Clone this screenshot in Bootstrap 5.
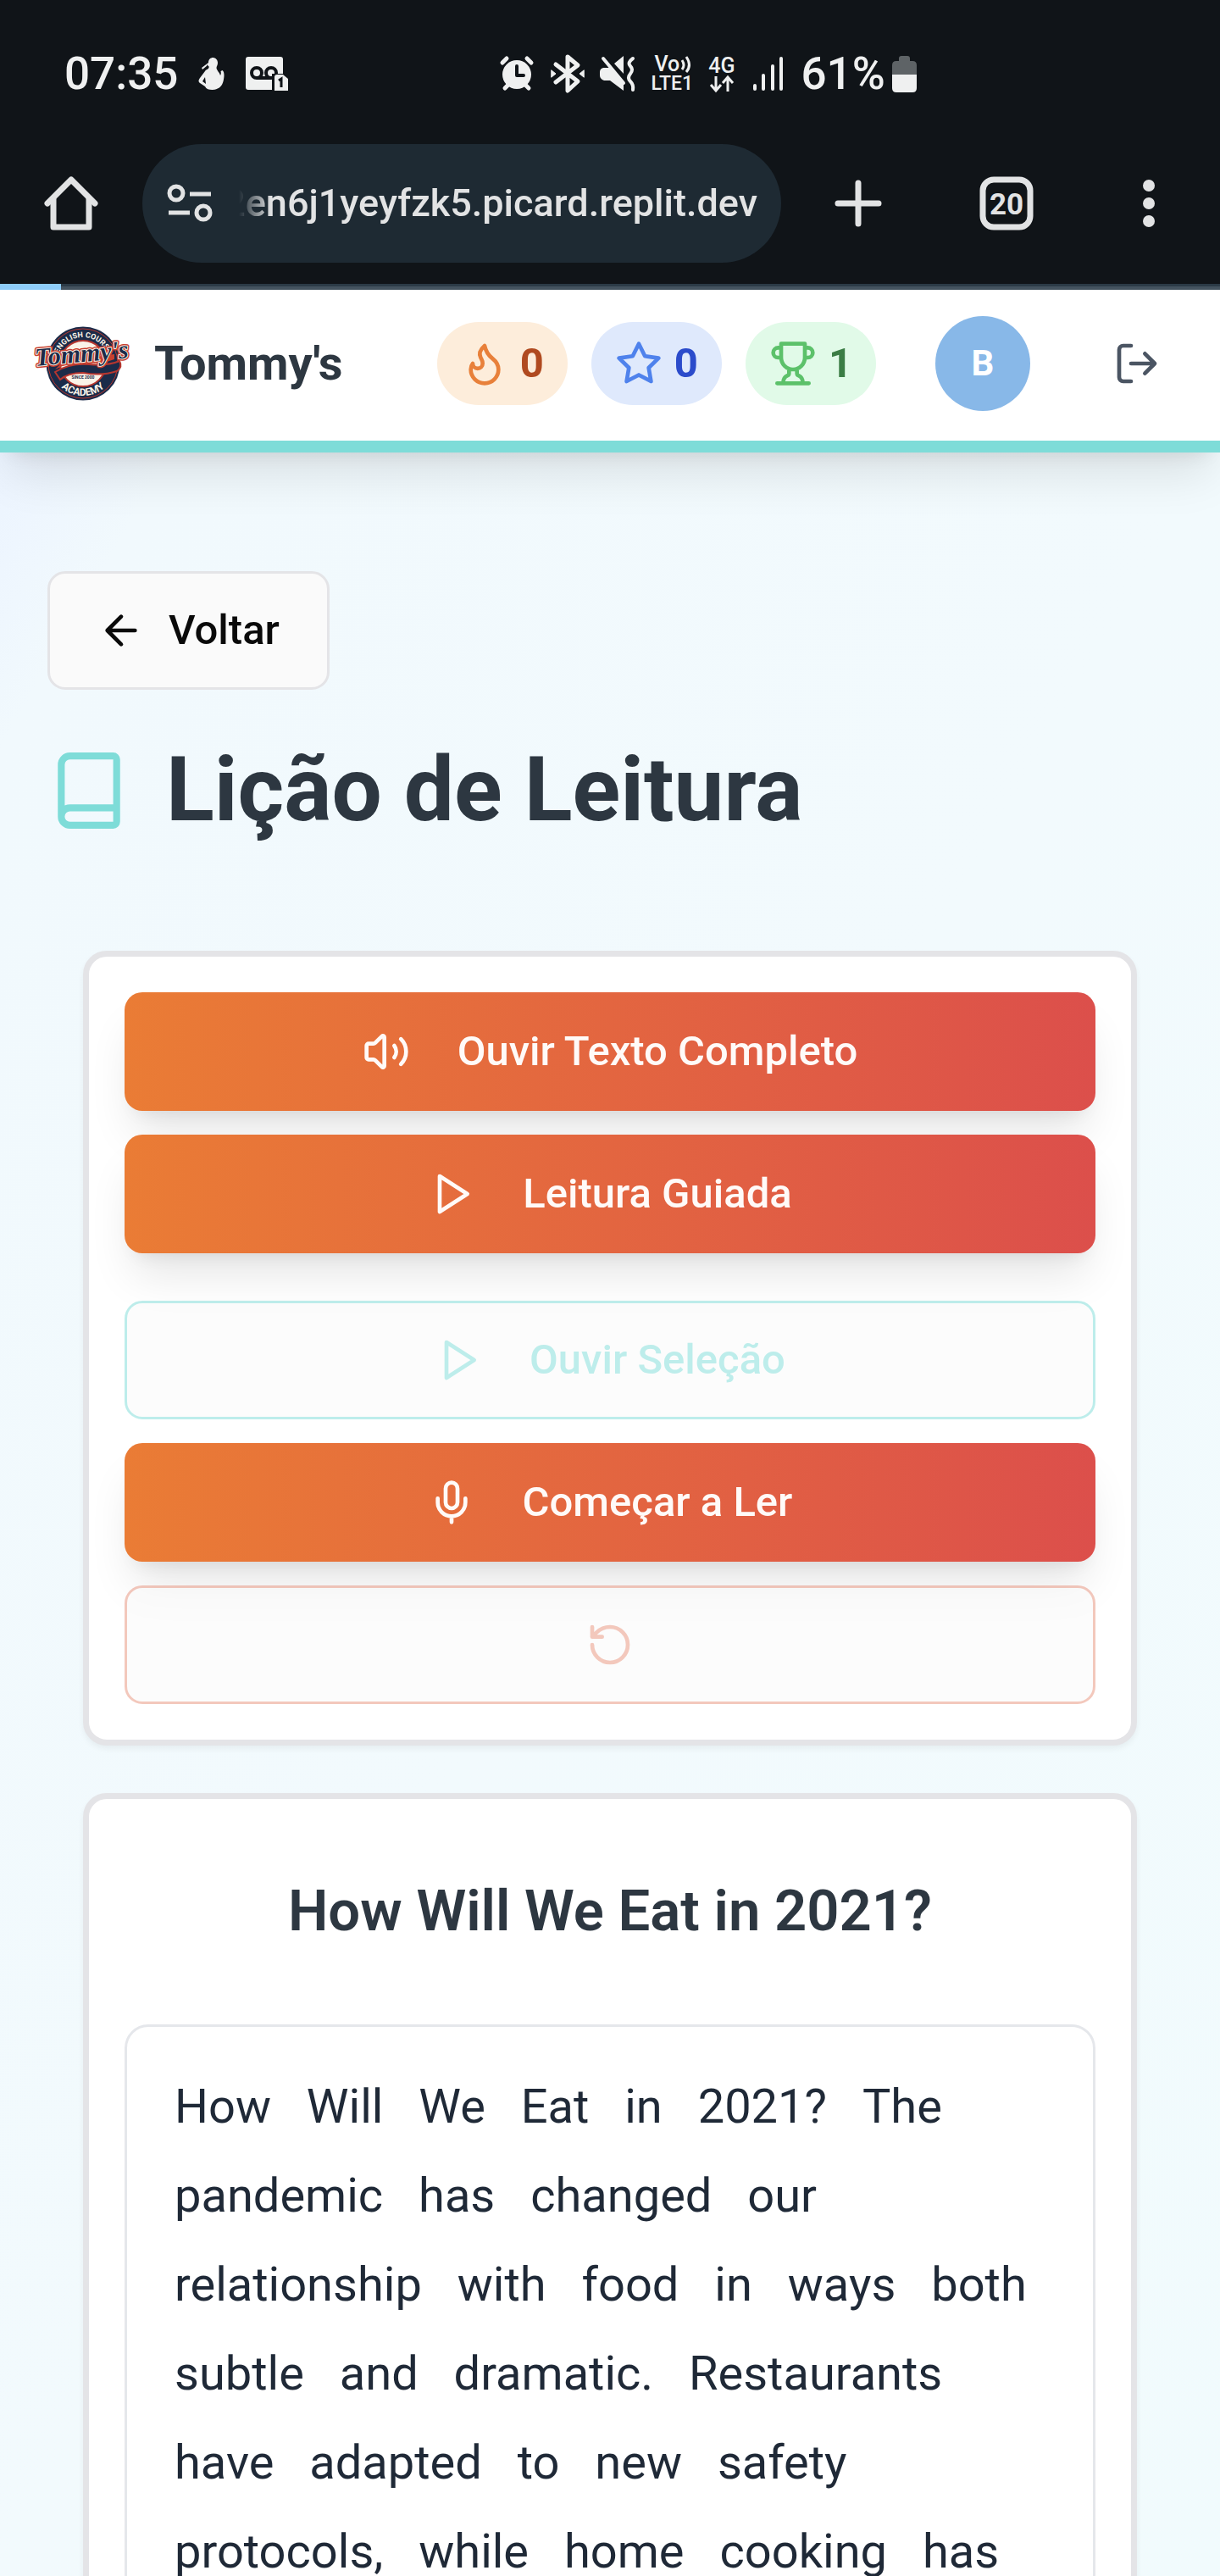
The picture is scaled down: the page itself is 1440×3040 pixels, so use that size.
<!DOCTYPE html>
<html lang="pt-BR">
<head>
<meta charset="utf-8">
<meta name="viewport" content="width=device-width, initial-scale=1">
<title>Tommy's – Lição de Leitura</title>
<link href="https://cdn.jsdelivr.net/npm/bootstrap@5.3.0/dist/css/bootstrap.min.css" rel="stylesheet">
<style>
  :root { --teal: #7edcd8; --coral: #e8927c; --ink: #2d3741; --line: #e4e4e7; }
  body { font-family: Roboto, "Liberation Sans", sans-serif; font-size: 49px; line-height: 70px; background: #101418; }
  svg { display: block; flex: none; overflow: visible; }
  .stroke-icon { width: 56px; height: 56px; fill: none; stroke: currentColor; stroke-width: 2; stroke-linecap: round; stroke-linejoin: round; }
  .shade { box-shadow: 0 35px 52px -10px rgba(0,0,0,.1), 0 14px 21px -14px rgba(0,0,0,.1); }

  /* phone status bar */
  .status-strip { height: 170px; padding: 4px 0 0 76px; font-size: 53px; font-weight: 500; color: #eff0f0; background: #101418; }
  .status-left { gap: 24px; }
  .status-right { gap: 18px; margin-left: 250px; }
  .net-label { font-size: 25px; line-height: 23px; gap: 0; }
  .net-label small { font-size: 23px; line-height: 23px; font-weight: 500; }

  /* browser toolbar */
  .browser-strip { padding: 0 0 25px 52px; background: #101418; color: #e2e3e4; }
  .browser-strip .btn { color: inherit; }
  .tool-slot { width: 168px; }
  .tool-slot.first-slot { width: 182px; }
  .url-pill { height: 140px; margin-left: 52px; padding: 0 28px 0 30px; border-radius: 70px; background: #1e2a33; }
  .url-pill input { font-size: 45px; font-weight: 500; line-height: 60px; color: #e2e3e4; text-align: right; -webkit-mask-image: linear-gradient(to right, transparent 22px, #000 60px); mask-image: linear-gradient(to right, transparent 22px, #000 60px); }
  .load-track { height: 7px; border-radius: 0; background: linear-gradient(#2b3a46 3px, #44535f 3px); }
  .load-track .progress-bar { background: #8ecdf9; }

  /* site header */
  .site-top { padding: 31px 70px 35px 42px; border-bottom: 14px solid var(--teal); background: #fff; z-index: 2; }
  .brand-name { font-size: 56px; font-weight: 700; color: var(--ink); margin-left: 28px; }
  .stat-pill { height: 98px; padding: 0 28px; gap: 14px; border-radius: 49px; font-weight: 700; }
  .stat-fire { background: #fdeddb; color: #b04a20; }
  .stat-fire svg { color: #e8803a; }
  .stat-star { background: #dfe9fc; color: #2b4bcb; }
  .stat-star svg { color: #4f82ec; }
  .stat-cup { background: #e1fae8; color: #3b7d45; }
  .stat-cup svg { color: #5cc16a; }
  .stat-row { gap: 28px; }
  .user-dot { width: 112px; height: 112px; margin-left: 70px; background: #88b8e8; color: #fff; font-size: 42px; font-weight: 700; }
  .exit-btn { margin-left: 98px; color: #4b5563; }

  /* page */
  .lesson-page { background: linear-gradient(to bottom right, #ecf4ff, #f1f9fd 7%, #f2fafd 50%, #f1fbfd); padding: 140px 56px 0; }
  .back-btn { height: 140px; padding: 0 56px; gap: 28px; border: 3px solid var(--line); border-radius: 21px; background: #fafafa; color: #0a0a0a; font-size: 49px; font-weight: 500; }
  .lesson-head { margin-top: 56px; gap: 42px; }
  .lesson-head svg { width: 98px; height: 98px; color: var(--teal); }
  .lesson-head h1 { font-size: 105px; line-height: 126px; font-weight: 700; color: var(--ink); }
  .panel-stack { margin: 126px 42px 0; gap: 56px; }
  .panel { border: 7px solid var(--line); border-radius: 28px; padding: 42px; background: #fff; box-shadow: 0 4px 7px rgba(0,0,0,.05); }
  .action-stack { gap: 28px; }
  .action-stack .spaced { margin-bottom: 28px; }
  .act { height: 140px; gap: 56px; border-radius: 21px; border: 0; font-size: 49px; font-weight: 500; }
  .act-fill, .act-fill:hover { background: linear-gradient(to right, #ea7c35, #dc4f4b); color: #fffaf8; }
  .act-line, .act-line:disabled { border: 3px solid currentColor; background: #fafafa; opacity: .5; }
  .act-teal, .act-teal:disabled { color: var(--teal); border-color: var(--teal); }
  .act-coral, .act-coral:disabled { color: var(--coral); border-color: var(--coral); }
  .story-title { font-size: 67px; line-height: 84px; font-weight: 600; color: var(--ink); padding: 48px 0 92px; }
  .story-box { border: 3px solid #e5e7eb; border-radius: 28px; padding: 42px 42px 140px; font-size: 56px; line-height: 105px; color: #1f2937; }
  .story-box span { padding: 0 14px; }
</style>
</head>
<body>
<div class="vh-100 overflow-hidden d-flex flex-column">

  <div class="status-strip d-flex align-items-center flex-shrink-0">
    <div class="status-left d-flex align-items-center">
      <span>07:35</span>
      <svg width="32" height="40" viewBox="0 0 32 40" fill="currentColor"><path d="M12 7c0-4 2.500-6 5.500-6S23 3.500 23 7c0 3-1.500 4-1.500 6 0 3 3.500 5 4.500 9 1-1.500 1-3 .5-5l2-1c3 2 2 9 1 13-1.500 6-6 10-13 10-4 0-7-1-8.500-4L2 31c-2-2-2-3 0-6l6-8c1-2 3-2 4-3 1-2-1-2-1-4L5 15l-1-2z"/><path d="m8 24 1 8-4-3zM10 9l3 3-2 2z" fill="#101418"/></svg>
      <svg width="50" height="40" viewBox="0 0 50 40"><path fill="currentColor" d="M3 0h38q3 0 3 3v20l-12 16H3q-3 0-3-3V3q0-3 3-3z"/><g fill="none" stroke="#101418" stroke-width="4"><circle cx="13" cy="19" r="6"/><circle cx="30" cy="19" r="6"/><path d="M13 25h17"/></g><path d="M31 20h20v20H31z" fill="#101418"/><path fill="currentColor" d="M34 24q0-3 3-3h7l6 5v14H34z"/><path d="m39 28 3-2v10" fill="none" stroke="#101418" stroke-width="3"/></svg>
    </div>
    <div class="status-right d-flex align-items-center">
      <svg width="42" height="42" viewBox="0 0 42 42"><g fill="none" stroke="currentColor" stroke-width="5" stroke-linecap="round"><path d="m3 8 5-5M32 3l5 5M6 38l5-5M34 38l-5-5"/></g><circle cx="20" cy="22" r="17" fill="currentColor"/><path d="M20 12v11h8" fill="none" stroke="#101418" stroke-width="4" stroke-linecap="round" stroke-linejoin="round"/></svg>
      <svg width="40" height="44" viewBox="0 0 40 44" fill="none" stroke="currentColor" stroke-width="5" stroke-linejoin="round" stroke-linecap="round"><path d="m6 11 26 20-12 11V2l12 10L6 32"/><path fill="currentColor" stroke-width="1" d="m1 18 5 4-5 4zM39 18l-5 4 5 4z"/></svg>
      <svg width="42" height="42" viewBox="0 0 42 42"><path fill="currentColor" d="M0 19q0-4 4-5h8l16 19v8L12 29H5q-5-2-5-6zM17 9l11-9v21z"/><path d="m4 3 24 29" stroke="currentColor" stroke-width="4" stroke-linecap="round"/><path d="M39 3q-7 5-3 9t0 9 0 9 3 10" fill="none" stroke="currentColor" stroke-width="4" stroke-linecap="round"/></svg>
      <div class="net-label d-flex flex-column">
        <div class="d-flex align-items-center ps-1"><span>Vo</span><svg width="16" height="20" viewBox="0 0 16 20" fill="none" stroke="currentColor" stroke-width="3"><path d="M3 5q4 6 0 11M8 1q7 10 0 18"/></svg></div>
        <small>LTE1</small>
      </div>
      <div class="net-label d-flex flex-column align-items-center">
        <span>4G</span>
        <svg width="30" height="20" viewBox="0 0 30 20" fill="none" stroke="currentColor" stroke-width="3"><path d="M8 1v16M2 11l6 7 6-7M22 19V3M16 9l6-7 6 7"/></svg>
      </div>
      <svg width="42" height="42" viewBox="0 0 42 42" stroke="currentColor" stroke-width="4" stroke-linecap="round"><path d="M6 35v4M16 23v16M27 12v27M37 3v36"/></svg>
      <div class="d-flex align-items-center gap-2"><span>61%</span>
      <svg width="29" height="43" viewBox="0 0 29 43"><path d="M8 3q0-3 3-3h7q3 0 3 3v3h3q5 0 5 5v12H0V11q0-5 5-5h3z" fill="#5e6366"/><path d="M0 22h29v16q0 5-5 5H5q-5 0-5-5z" fill="currentColor"/></svg></div>
    </div>
  </div>

  <div class="browser-strip d-flex align-items-center flex-shrink-0">
    <button class="btn border-0 p-0" type="button" aria-label="Início"><svg width="64" height="64" viewBox="0 0 64 64" fill="none" stroke="currentColor" stroke-width="7" stroke-linejoin="round" stroke-linecap="round"><path d="M4 32 32 4l28 28"/><path d="M11 27v33h42V27"/></svg></button>
    <div class="url-pill d-flex align-items-center flex-grow-1">
      <svg width="54" height="44" viewBox="0 0 54 44" fill="none" stroke="currentColor" stroke-width="5"><circle cx="10" cy="10" r="8"/><path d="M26 11h25M1 33h25"/><circle cx="42" cy="33" r="8"/></svg>
      <input class="form-control bg-transparent border-0 rounded-0 p-0 ms-2 flex-grow-1" type="text" aria-label="Endereço" value="2en6j1yeyfzk5.picard.replit.dev">
    </div>
    <button class="tool-slot first-slot btn border-0 p-0 d-flex justify-content-center" type="button" aria-label="Nova guia"><svg width="56" height="56" viewBox="0 0 56 56" stroke="currentColor" stroke-width="7" stroke-linecap="round"><path d="M28 4v48M4 28h48"/></svg></button>
    <button class="tool-slot btn border-0 p-0 d-flex justify-content-center" type="button" aria-label="Guias abertas"><svg width="64" height="64" viewBox="0 0 64 64"><rect x="4" y="4" width="56" height="56" rx="13" fill="none" stroke="currentColor" stroke-width="7"/><text x="32" y="45" text-anchor="middle" font-family="Roboto, sans-serif" font-size="35" font-weight="700" fill="currentColor">20</text></svg></button>
    <button class="tool-slot btn border-0 p-0 d-flex justify-content-center" type="button" aria-label="Menu"><svg width="14" height="56" viewBox="0 0 14 56" fill="currentColor"><circle cx="7" cy="7" r="7"/><circle cx="7" cy="28" r="7"/><circle cx="7" cy="49" r="7"/></svg></button>
  </div>
  <div class="load-track progress flex-shrink-0" role="progressbar" aria-label="Carregando" aria-valuenow="5" aria-valuemin="0" aria-valuemax="100"><div class="progress-bar" style="width:5%"></div></div>

  <header class="site-top shade position-relative d-flex align-items-center flex-shrink-0">
    <a href="#" class="d-flex align-items-center text-decoration-none">
      <svg width="112" height="112" viewBox="-1 -12 112 112">
        <defs><path id="arcTop" d="M24 44a31 31 0 0 1 62 0"/><path id="arcLow" d="M17 44a38 38 0 0 0 76 0"/></defs>
        <circle cx="55" cy="44" r="43.500" fill="#1b2b49"/><circle cx="55" cy="44" r="41" fill="none" stroke="#b5362f"/>
        <circle cx="55" cy="44" r="27" fill="#faf3e8" stroke="#b5362f" stroke-width="2"/>
        <g fill="#faf3e8" font-family="Roboto, sans-serif" font-weight="700"><text font-size="9"><textPath href="#arcTop" startOffset="50%" text-anchor="middle">ENGLISH COURSE</textPath></text><text font-size="12"><textPath href="#arcLow" startOffset="50%" text-anchor="middle">ACADEMY</textPath></text></g>
        <path d="M22 54q18-11 40-9t36-4q4 7-3 12-18 6-40 2-18 0-27 8z" fill="#1b2b49" stroke="#b5362f" stroke-width="2"/>
        <path d="M22 51q18-10 36-8t34-4v-6l-60 8z" fill="#c8402f"/>
        <text x="54" y="42" text-anchor="middle" transform="rotate(-5 55 40)" font-family="Liberation Serif, serif" font-style="italic" font-weight="700" font-size="30" fill="#1b2b49" stroke="#c8402f" stroke-width="5" stroke-linejoin="round" paint-order="stroke">Tommy's</text>
        <text x="54" y="42" text-anchor="middle" transform="rotate(-5 55 40)" font-family="Liberation Serif, serif" font-style="italic" font-weight="700" font-size="30" fill="#1b2b49" stroke="#faf3e8" stroke-width="2" stroke-linejoin="round" paint-order="stroke">Tommy's</text>
        <text x="55" y="62" text-anchor="middle" font-family="Roboto, sans-serif" font-weight="700" font-size="5" fill="#1b2b49">SINCE 2000</text>
      </svg>
      <span class="brand-name">Tommy's</span>
    </a>
    <div class="stat-row d-flex align-items-center ms-auto">
      <div class="stat-pill stat-fire d-flex align-items-center"><svg class="stroke-icon" viewBox="0 0 24 24"><path d="M8.500 14.500A2.500 2.500 0 0 0 11 12c0-1.380-.5-2-1-3-1.072-2.143-.224-4.054 2-6 .5 2.500 2 4.900 4 6.500 2 1.600 3 3.500 3 5.500a7 7 0 1 1-14 0c0-1.153.433-2.294 1-3a2.500 2.500 0 0 0 2.500 2.500z"/></svg><span>0</span></div>
      <div class="stat-pill stat-star d-flex align-items-center"><svg class="stroke-icon" viewBox="0 0 24 24"><path d="m12 2 3.090 6.260L22 9.270l-5 4.870 1.180 6.880L12 17.770l-6.180 3.250L7 14.140 2 9.270l6.910-1.010z"/></svg><span>0</span></div>
      <div class="stat-pill stat-cup d-flex align-items-center"><svg class="stroke-icon" viewBox="0 0 24 24"><path d="M6 9H4.500a2.500 2.500 0 0 1 0-5H6M18 9h1.500a2.500 2.500 0 0 0 0-5H18M4 22h16M10 14.660V17c0 .55-.47.980-.97 1.210C7.850 18.750 7 20.240 7 22M14 14.660V17c0 .55.47.980.97 1.210C16.150 18.750 17 20.240 17 22M18 2H6v7a6 6 0 0 0 12 0V2Z"/></svg><span>1</span></div>
    </div>
    <div class="user-dot rounded-circle d-flex align-items-center justify-content-center">B</div>
    <button class="exit-btn btn border-0 p-0" type="button" aria-label="Sair"><svg class="stroke-icon" viewBox="0 0 24 24"><path d="M9 21H5a2 2 0 0 1-2-2V5a2 2 0 0 1 2-2h4M16 17l5-5-5-5M21 12H9"/></svg></button>
  </header>

  <main class="lesson-page flex-grow-1 overflow-hidden">
    <button class="back-btn btn d-inline-flex align-items-center" type="button"><svg class="stroke-icon" viewBox="0 0 24 24"><path d="m12 19-7-7 7-7M19 12H5"/></svg>Voltar</button>
    <div class="lesson-head d-flex align-items-center">
      <svg class="stroke-icon" viewBox="0 0 24 24"><path d="M4 19.500v-15A2.500 2.500 0 0 1 6.500 2H19a1 1 0 0 1 1 1v18a1 1 0 0 1-1 1H6.500a1 1 0 0 1 0-5H20"/></svg>
      <h1 class="m-0">Lição de Leitura</h1>
    </div>

    <div class="panel-stack d-flex flex-column">
      <section class="panel action-stack d-flex flex-column">
        <button class="act act-fill shade btn w-100 d-flex align-items-center justify-content-center" type="button"><svg class="stroke-icon" viewBox="0 0 24 24"><path d="M11 4.702a.705.705 0 0 0-1.203-.498L6.413 7.587A1.400 1.400 0 0 1 5.416 8H3a1 1 0 0 0-1 1v6a1 1 0 0 0 1 1h2.416a1.400 1.400 0 0 1 .997.413l3.383 3.384A.705.705 0 0 0 11 19.298zM16 9a5 5 0 0 1 0 6M19.364 18.364a9 9 0 0 0 0-12.728"/></svg>Ouvir Texto Completo</button>
        <button class="act act-fill shade spaced btn w-100 d-flex align-items-center justify-content-center" type="button"><svg class="stroke-icon" viewBox="0 0 24 24"><path d="m6 3 14 9-14 9z"/></svg>Leitura Guiada</button>
        <button class="act act-line act-teal btn w-100 d-flex align-items-center justify-content-center" type="button" disabled><svg class="stroke-icon" viewBox="0 0 24 24"><path d="m6 3 14 9-14 9z"/></svg>Ouvir Seleção</button>
        <button class="act act-fill shade btn w-100 d-flex align-items-center justify-content-center" type="button"><svg class="stroke-icon" viewBox="0 0 24 24"><path d="M12 2a3 3 0 0 0-3 3v7a3 3 0 0 0 6 0V5a3 3 0 0 0-3-3ZM19 10v2a7 7 0 0 1-14 0v-2M12 19v3"/></svg>Começar a Ler</button>
        <button class="act act-line act-coral btn w-100 d-flex align-items-center justify-content-center" type="button" aria-label="Reiniciar" disabled><svg class="stroke-icon" viewBox="0 0 24 24"><path d="M3 12a9 9 0 1 0 9-9 9.750 9.750 0 0 0-6.740 2.740L3 8M3 3v5h5"/></svg></button>
      </section>

      <section class="panel">
        <h2 class="story-title text-center m-0">How Will We Eat in 2021?</h2>
        <div class="story-box">
          <span>How</span> <span>Will</span> <span>We</span> <span>Eat</span> <span>in</span> <span>2021?</span> <span>The</span> <span>pandemic</span> <span>has</span> <span>changed</span> <span>our</span> <span>relationship</span> <span>with</span> <span>food</span> <span>in</span> <span>ways</span> <span>both</span> <span>subtle</span> <span>and</span> <span>dramatic.</span> <span>Restaurants</span> <span>have</span> <span>adapted</span> <span>to</span> <span>new</span> <span>safety</span> <span>protocols,</span> <span>while</span> <span>home</span> <span>cooking</span> <span>has</span>
        </div>
      </section>
    </div>
  </main>
</div>
<script src="https://cdn.jsdelivr.net/npm/bootstrap@5.3.0/dist/js/bootstrap.bundle.min.js"></script>
</body>
</html>
